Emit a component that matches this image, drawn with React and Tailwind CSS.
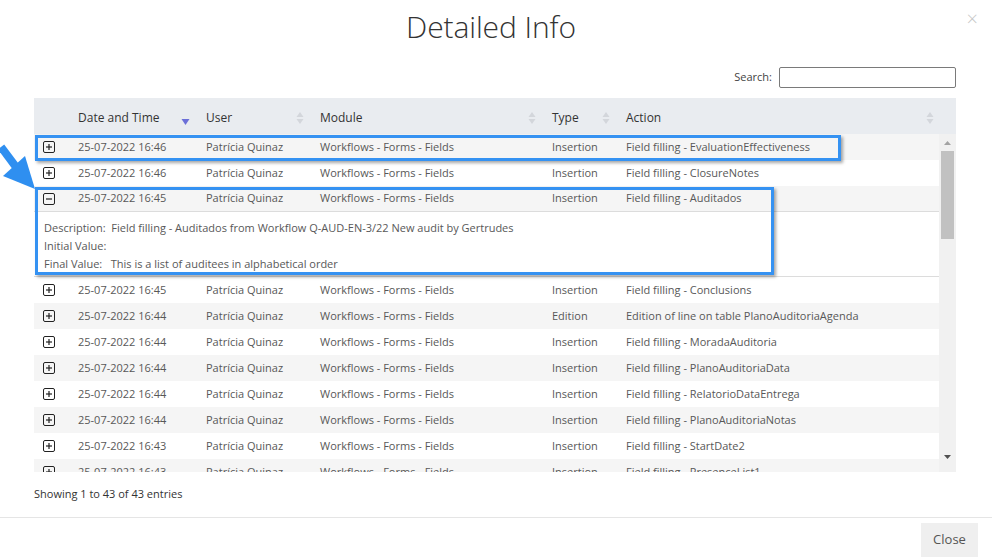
import React from 'react';

const rows = [
  { date: '25-07-2022 16:46', type: 'Insertion', action: 'Field filling - EvaluationEffectiveness' },
  { date: '25-07-2022 16:46', type: 'Insertion', action: 'Field filling - ClosureNotes' },
  { date: '25-07-2022 16:45', type: 'Insertion', action: 'Field filling - Auditados', open: true },
  { date: '25-07-2022 16:45', type: 'Insertion', action: 'Field filling - Conclusions' },
  { date: '25-07-2022 16:44', type: 'Edition', action: 'Edition of line on table PlanoAuditoriaAgenda' },
  { date: '25-07-2022 16:44', type: 'Insertion', action: 'Field filling - MoradaAuditoria' },
  { date: '25-07-2022 16:44', type: 'Insertion', action: 'Field filling - PlanoAuditoriaData' },
  { date: '25-07-2022 16:44', type: 'Insertion', action: 'Field filling - RelatorioDataEntrega' },
  { date: '25-07-2022 16:44', type: 'Insertion', action: 'Field filling - PlanoAuditoriaNotas' },
  { date: '25-07-2022 16:43', type: 'Insertion', action: 'Field filling - StartDate2' },
  { date: '25-07-2022 16:43', type: 'Insertion', action: 'Field filling - PresenceList1' },
];

const cols = 'grid grid-cols-[34px_128px_114px_232px_74px_1fr] items-center';

const ToggleIcon = ({ open }) => (
  <svg width="12" height="12" viewBox="0 0 12 12" className="ml-[9px]">
    <rect x="0.5" y="0.5" width="11" height="11" rx="1.5" fill="none" stroke="#222" strokeWidth="1" />
    <path d="M3 6h6" stroke="#222" strokeWidth="1.2" />
    {!open && <path d="M6 3v6" stroke="#222" strokeWidth="1.2" />}
  </svg>
);

const SortBoth = () => (
  <svg width="8" height="14" viewBox="0 0 8 14">
    <path d="M4 1L7.5 6H0.5z" fill="#d3d6db" />
    <path d="M4 13L7.5 8H0.5z" fill="#d3d6db" />
  </svg>
);

const SortDesc = () => (
  <svg width="9" height="14" viewBox="0 0 9 14" className="mt-[6px]">
    <path d="M4.5 11L8.5 5H0.5z" fill="#6b6fd8" />
  </svg>
);

const HeadCell = ({ label, sort = 'both' }) => (
  <div className="flex items-center justify-between pl-[10px] pr-[6px] h-full">
    <span>{label}</span>
    {sort === 'desc' ? <SortDesc /> : sort === 'both' ? <SortBoth /> : null}
  </div>
);

export default function App() {
  return (
    <div className="relative w-[992px] h-[560px] bg-white overflow-hidden text-[#333] font-['Open_Sans','Noto_Sans',sans-serif]">
      {/* header */}
      <div className="relative h-[54px] flex items-center justify-center pr-[10px]">
        <h1 className="text-[30px] font-light tracking-[-0.1px] text-[#333] leading-none">Detailed Info</h1>
        <span className="absolute right-[14px] top-[4px] text-[20px] font-light text-[#c7c7c7]">×</span>
      </div>

      <div className="px-[34px] pr-[36px]">
        <div className="flex justify-end items-center h-[44px] pt-[2px] gap-[7px] text-[11px] text-[#444]">
          <span>Search:</span>
          <div className="w-[177px] h-[21px] border border-[#7a7a7a] rounded-[2px]" />
        </div>

        {/* table head */}
        <div className={`${cols} h-[36px] pt-[3px] bg-[#e9ecf0] text-[12px] text-[#333]`}>
          <div />
          <HeadCell label="Date and Time" sort="desc" />
          <HeadCell label="User" />
          <HeadCell label="Module" />
          <HeadCell label="Type" />
          <div className="flex items-center justify-between pl-[10px] pr-[22px]">
            <span>Action</span>
            <SortBoth />
          </div>
        </div>

        {/* table body */}
        <div className="flex h-[338px] overflow-hidden">
          <div className="flex-1 text-[11px] text-[#585858]">
            {rows.map((r, i) => (
              <React.Fragment key={i}>
                <div className={`${cols} h-[26px] ${i % 2 === 0 ? 'bg-[#f5f5f5]' : 'bg-white'} ${r.open ? 'border-b border-[#dcdcdc]' : ''}`}>
                  <div><ToggleIcon open={r.open} /></div>
                  <div className="pl-[10px] whitespace-nowrap">{r.date}</div>
                  <div className="pl-[10px] whitespace-nowrap">Patrícia Quinaz</div>
                  <div className="pl-[10px] whitespace-nowrap">Workflows - Forms - Fields</div>
                  <div className="pl-[10px]">{r.type}</div>
                  <div className="pl-[10px] whitespace-nowrap">{r.action}</div>
                </div>
                {r.open && (
                  <div className="h-[65px] border-b border-[#dcdcdc] pl-[10px] pt-[7px] leading-[18px] bg-white">
                    <div>Description:&nbsp; Field filling - Auditados from Workflow Q-AUD-EN-3/22 New audit by Gertrudes</div>
                    <div>Initial Value:</div>
                    <div>Final Value:&nbsp;&nbsp; This is a list of auditees in alphabetical order</div>
                  </div>
                )}
              </React.Fragment>
            ))}
          </div>
          {/* scrollbar */}
          <div className="w-[17px] bg-[#f1f1f1] flex flex-col items-center">
            <svg width="9" height="17" viewBox="0 0 9 17">
              <path d="M4.5 7L8 11H1z" fill="#a3a3a3" />
            </svg>
            <div className="w-[13px] h-[88px] bg-[#c1c1c1]" />
            <div className="flex-1" />
            <svg width="9" height="17" viewBox="0 0 9 17" className="mb-[6px]">
              <path d="M4.5 10L8 6H1z" fill="#505050" />
            </svg>
          </div>
        </div>

        <div className="h-[45px] flex items-center text-[11px] text-[#333]">Showing 1 to 43 of 43 entries</div>
      </div>

      {/* footer */}
      <div className="border-t border-[#e5e5e5] flex justify-end pr-[14px] pt-[5px]">
        <button className="w-[57px] h-[34px] bg-[#efefef] text-[13px] text-[#555]">Close</button>
      </div>

      {/* annotation overlays */}
      <div className="absolute left-[35px] top-[135px] w-[806px] h-[26px] border-[3px] border-[#3592f2] shadow-[2px_2px_3px_rgba(0,0,0,0.35)]" />
      <div className="absolute left-[35px] top-[187px] w-[739px] h-[88px] border-[3px] border-[#3592f2] shadow-[2px_2px_3px_rgba(0,0,0,0.35)]" />
      <svg className="absolute left-0 top-[143px]" width="38" height="48" viewBox="0 0 38 48">
        <path d="M1 4L16 24" stroke="#2f8ff0" strokeWidth="8" />
        <path d="M35 46L3 33L25 13z" fill="#2f8ff0" />
      </svg>
    </div>
  );
}
